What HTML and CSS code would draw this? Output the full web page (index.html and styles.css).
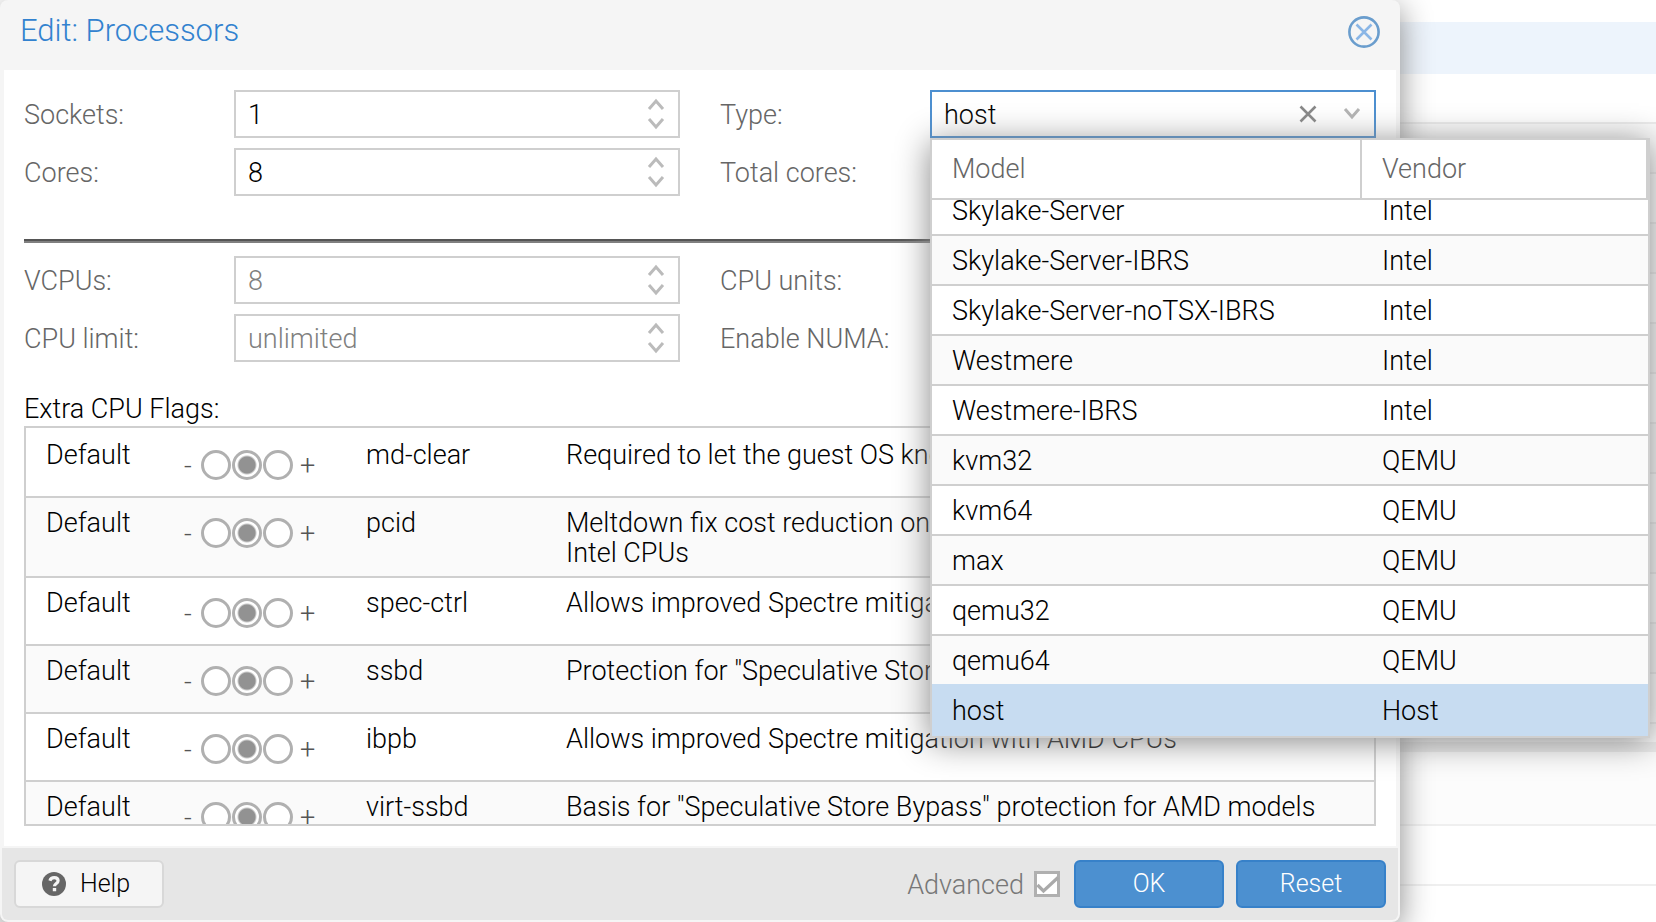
FILE: index.html
```
<!DOCTYPE html>
<html lang="en">
<head>
<meta charset="utf-8">
<title>Edit: Processors</title>
<link rel="stylesheet" href="styles.css">
</head>
<body>
<svg class="defs" aria-hidden="true">
  <symbol id="up" viewBox="0 0 18 12"><path d="M2 11 9 3l7 8" fill="none" stroke="currentColor" stroke-width="3"/></symbol>
  <symbol id="down" viewBox="0 0 18 12"><path d="M2 1l7 8 7-8" fill="none" stroke="currentColor" stroke-width="3"/></symbol>
</svg>
<div class="desktop">
  <div class="backdrop" aria-hidden="true">
    <div class="band"></div>
    <div class="lines"></div>
    <div class="split"></div>
    <div class="pane"></div>
    <div class="entry"></div>
  </div>

  <form class="dialog">
    <header class="dialog-head">
      <h1 class="title">Edit: Processors</h1>
      <button class="close" type="button" aria-label="Close">
        <svg viewBox="0 0 32 32" width="32" height="32"><g fill="none" stroke="currentColor"><circle cx="16" cy="16" r="14.6" stroke-width="2.6"/><path d="M8.500 8.500l15 15M23.500 8.500l-15 15" stroke="#8ab6e6" stroke-width="2.6"/></g></svg>
      </button>
    </header>

    <main class="dialog-body">
      <div class="fields">
        <div class="field">
          <label for="sockets">Sockets:</label>
          <div class="box"><input id="sockets" type="number" value="1">
            <div class="spin"><button type="button" aria-label="Increase sockets"><svg><use href="#up"/></svg></button><button type="button" aria-label="Decrease sockets"><svg><use href="#down"/></svg></button></div></div>
        </div>
        <div class="field">
          <label for="type">Type:</label>
          <div class="box combo"><input id="type" type="text" role="combobox" aria-expanded="true" value="host">
            <button class="trigger clear" type="button" aria-label="Clear"><svg viewBox="0 0 18 18"><path d="M1.500 1.500l15 15M16.500 1.500l-15 15" fill="none" stroke="currentColor" stroke-width="2.600"/></svg></button>
            <button class="trigger expand" type="button" aria-label="Expand"><svg><use href="#down"/></svg></button>
            <div class="picker">
              <table class="models model-head">
                <thead><tr><th scope="col">Model</th><th scope="col">Vendor</th></tr></thead>
              </table>
              <div class="picker-list">
                <table class="models model-rows">
                  <tbody>
                    <tr><td>Skylake-Server</td><td>Intel</td></tr>
                    <tr><td>Skylake-Server-IBRS</td><td>Intel</td></tr>
                    <tr><td>Skylake-Server-noTSX-IBRS</td><td>Intel</td></tr>
                    <tr><td>Westmere</td><td>Intel</td></tr>
                    <tr><td>Westmere-IBRS</td><td>Intel</td></tr>
                    <tr><td>kvm32</td><td>QEMU</td></tr>
                    <tr><td>kvm64</td><td>QEMU</td></tr>
                    <tr><td>max</td><td>QEMU</td></tr>
                    <tr><td>qemu32</td><td>QEMU</td></tr>
                    <tr class="before-selected"><td>qemu64</td><td>QEMU</td></tr>
                    <tr class="selected"><td>host</td><td>Host</td></tr>
                  </tbody>
                </table>
              </div>
            </div>
          </div>
        </div>
        <div class="field">
          <label for="cores">Cores:</label>
          <div class="box"><input id="cores" type="number" value="8">
            <div class="spin"><button type="button" aria-label="Increase cores"><svg><use href="#up"/></svg></button><button type="button" aria-label="Decrease cores"><svg><use href="#down"/></svg></button></div></div>
        </div>
        <div class="field">
          <label for="total">Total cores:</label>
          <output id="total"></output>
        </div>
      </div>

      <hr class="rule">

      <div class="fields">
        <div class="field">
          <label for="vcpus">VCPUs:</label>
          <div class="box"><input id="vcpus" type="number" placeholder="8">
            <div class="spin"><button type="button" aria-label="Increase VCPUs"><svg><use href="#up"/></svg></button><button type="button" aria-label="Decrease VCPUs"><svg><use href="#down"/></svg></button></div></div>
        </div>
        <div class="field">
          <label for="units">CPU units:</label>
          <div class="box"><input id="units" type="number"></div>
        </div>
        <div class="field">
          <label for="limit">CPU limit:</label>
          <div class="box"><input id="limit" type="number" placeholder="unlimited">
            <div class="spin"><button type="button" aria-label="Increase CPU limit"><svg><use href="#up"/></svg></button><button type="button" aria-label="Decrease CPU limit"><svg><use href="#down"/></svg></button></div></div>
        </div>
        <div class="field">
          <label for="numa">Enable NUMA:</label>
          <span class="check"><input id="numa" type="checkbox"></span>
        </div>
      </div>

      <h2 class="flags-label" id="flags-label">Extra CPU Flags:</h2>
      <div class="flags">
        <table class="flag-table" aria-labelledby="flags-label">
          <tbody>
            <tr><td>Default</td><td class="tri"><div class="slider"><span class="sign">-</span><input type="radio" name="f1" aria-label="Off"><input type="radio" name="f1" aria-label="Default" checked><input type="radio" name="f1" aria-label="On"><span class="sign plus">+</span></div></td><td>md-clear</td><td>Required to let the guest OS know if MDS is mitigated correctly</td></tr>
            <tr><td>Default</td><td class="tri"><div class="slider"><span class="sign">-</span><input type="radio" name="f2" aria-label="Off"><input type="radio" name="f2" aria-label="Default" checked><input type="radio" name="f2" aria-label="On"><span class="sign plus">+</span></div></td><td>pcid</td><td>Meltdown fix cost reduction on Westmere, Sandy-, and IvyBridge Intel CPUs</td></tr>
            <tr><td>Default</td><td class="tri"><div class="slider"><span class="sign">-</span><input type="radio" name="f3" aria-label="Off"><input type="radio" name="f3" aria-label="Default" checked><input type="radio" name="f3" aria-label="On"><span class="sign plus">+</span></div></td><td>spec-ctrl</td><td>Allows improved Spectre mitigation with Intel CPUs</td></tr>
            <tr><td>Default</td><td class="tri"><div class="slider"><span class="sign">-</span><input type="radio" name="f4" aria-label="Off"><input type="radio" name="f4" aria-label="Default" checked><input type="radio" name="f4" aria-label="On"><span class="sign plus">+</span></div></td><td>ssbd</td><td>Protection for "Speculative Store Bypass" for Intel models</td></tr>
            <tr><td>Default</td><td class="tri"><div class="slider"><span class="sign">-</span><input type="radio" name="f5" aria-label="Off"><input type="radio" name="f5" aria-label="Default" checked><input type="radio" name="f5" aria-label="On"><span class="sign plus">+</span></div></td><td>ibpb</td><td>Allows improved Spectre mitigation with AMD CPUs</td></tr>
            <tr><td>Default</td><td class="tri"><div class="slider"><span class="sign">-</span><input type="radio" name="f6" aria-label="Off"><input type="radio" name="f6" aria-label="Default" checked><input type="radio" name="f6" aria-label="On"><span class="sign plus">+</span></div></td><td>virt-ssbd</td><td>Basis for "Speculative Store Bypass" protection for AMD models</td></tr>
          </tbody>
        </table>
      </div>
    </main>

    <footer class="dialog-foot">
      <button class="btn help" type="button">
        <svg viewBox="0 0 24 24" width="24" height="24"><circle cx="12" cy="12" r="12" fill="#666"/><path d="M7.900 8.700c.7-2.200 2.200-3.100 4.300-3.100 2.300 0 3.900 1.300 3.900 3.200 0 2.700-3.600 2.700-3.600 5.400" fill="none" stroke="#f5f5f5" stroke-width="3.200"/><path d="M10.800 16h3.400v3.300h-3.400z" fill="#f5f5f5"/></svg>
        Help
      </button>
      <div class="actions">
        <label class="advanced" for="advanced">Advanced</label>
        <span class="check"><input id="advanced" type="checkbox" checked><svg viewBox="0 0 26 26" width="26" height="26"><path d="M3.500 14l6 6L24 6.500" fill="none" stroke="#aaa" stroke-width="3.200"/></svg></span>
        <button class="btn primary" type="submit">OK</button>
        <button class="btn primary" type="reset">Reset</button>
      </div>
    </footer>
  </form>
</div>
</body>
</html>
```
FILE: styles.css
```
* { box-sizing: border-box; }

body {
  margin: 0;
  background: #fff;
  color: #000;
  font: 300 27px/30px Roboto, "Liberation Sans", sans-serif;
}

input, button {
  font: inherit;
  color: inherit;
  margin: 0;
}

button {
  border: 0;
  padding: 0;
  background: none;
  cursor: pointer;
}

svg { display: block; }

.defs { position: absolute; width: 0; height: 0; }

.desktop {
  display: grid;
  min-height: 100vh;
  overflow: hidden;
}

.backdrop, .dialog { grid-area: 1 / 1; }

/* Page behind the window */
.backdrop {
  display: flex;
  flex-direction: column;
  padding-top: 22px;
}
.band { height: 52px; background: #edf4fc; }
.lines {
  height: 668px;
  background: repeating-linear-gradient(#fff 0 48px, #ebebeb 48px 50px, #fafafa 50px 98px, #ebebeb 98px 100px);
}
.split { height: 10px; background: #ebebeb; }
.pane { height: 74px; background: #fcfcfc; border-bottom: 2px solid #efefef; }
.entry { height: 60px; border-bottom: 2px solid #efefef; }

/* Window */
.dialog {
  width: calc(100% - 256px);
  display: flex;
  flex-direction: column;
  background: #f5f5f5;
  border-radius: 8px;
  box-shadow: 0 8px 32px #888;
}

.dialog-head {
  display: flex;
  justify-content: space-between;
  padding: 16px 20px 22px;
}
.title {
  margin: 0;
  font-size: 31px;
  line-height: 30px;
  font-weight: 300;
  color: #3282cf;
}
.close { width: 32px; height: 32px; color: #6a9dcd; }

.dialog-body {
  flex: 1;
  margin: 0 4px;
  padding: 20px;
  background: #fff;
}

.fields {
  display: grid;
  grid-template-columns: repeat(2, minmax(0, 1fr));
  gap: 10px 40px;
}
.field {
  display: grid;
  grid-template-columns: 210px minmax(0, 1fr);
  align-items: center;
  min-height: 48px;
  color: #666;
}
.field label { padding-top: 2px; }

.box {
  display: flex;
  align-items: center;
  height: 48px;
  border: 2px solid #cfcfcf;
  background: #fff;
}
.box input {
  flex: 1;
  min-width: 0;
  height: 100%;
  padding: 2px 12px 0;
  border: 0;
  outline: 0;
  background: none;
  color: #000;
  appearance: textfield;
}
.box input::-webkit-inner-spin-button { display: none; }
.box input::placeholder { color: #808080; opacity: 1; }

.spin {
  display: grid;
  gap: 8px;
  padding-right: 13px;
  color: #bbb;
}
.spin svg, .expand svg { width: 18px; height: 12px; }

/* The drop-down's shadow falls across the lower half of its own field */
.combo { position: relative; border-color: #4c8fd0; }
.trigger {
  display: grid;
  place-items: center;
  width: 44px;
  height: 44px;
}
.clear { color: #888; }
.clear svg { width: 18px; height: 18px; }
.expand { color: #b4b4b4; }

/* Model drop-down */
.picker {
  position: absolute;
  z-index: 1;
  top: 46px;
  left: -2px;
  width: 720px;
  border: 2px solid #cfcfcf;
  background: #fff;
  box-shadow: 0 4px 32px #888;
}
.models {
  width: 100%;
  table-layout: fixed;
  border-collapse: separate;
  border-spacing: 0;
  color: #000;
}
.models th, .models td {
  padding: 0 20px;
  text-align: left;
  font-weight: 300;
  border-bottom: 2px solid #cfcfcf;
}
.models th:first-child, .models td:first-child { width: 430px; }
.models th {
  height: 60px;
  color: #666;
  border-right: 2px solid #cfcfcf;
}
.models td { height: 50px; padding-top: 2px; }
.model-rows tr:nth-child(even) { background: #fafafa; }
.model-rows .selected { background: #c7dcf1; }
.model-rows .before-selected td, .model-rows .selected td { border-color: #c7dcf1; }
.picker-list {
  display: flex;
  flex-direction: column;
  justify-content: flex-end;
  height: 536px;
  overflow: hidden;
}
.model-rows { flex: none; }

.rule {
  height: 4px;
  margin: 43px 0 13px;
  border: 0;
  border-top: 2px solid #555;
  background: #808080;
}

.flags-label {
  margin: 32px 0 2px;
  font-size: 27px;
  line-height: 30px;
  font-weight: 300;
}
.flags {
  height: 400px;
  overflow: hidden;
  border: 2px solid #cfcfcf;
}
.flag-table {
  width: 100%;
  table-layout: fixed;
  border-collapse: separate;
  border-spacing: 0;
}
.flag-table td {
  padding: 10px 20px 8px;
  vertical-align: top;
  border-bottom: 2px solid #cfcfcf;
}
.flag-table td:nth-child(1) { width: 140px; }
.flag-table td:nth-child(2) { width: 180px; }
.flag-table td:nth-child(3) { width: 200px; }
.flag-table tr:first-child td { border-top: 2px solid #fff; }
.flag-table tr:nth-child(even) { background: #fafafa; }
.flag-table .tri { padding: 20px 0 16px 18px; }

.slider {
  display: flex;
  align-items: center;
  height: 30px;
  color: #555;
}
.sign { width: 17px; padding-top: 2px; }
.plus { padding-left: 7px; }
.slider input {
  appearance: none;
  width: 30px;
  height: 30px;
  border: 3px solid #b0b0b0;
  border-radius: 50%;
  background: #fff;
}
.slider input:checked {
  margin: 0 1px;
  background: radial-gradient(circle, #929292 8px, #fff 10px);
}

/* Footer */
.dialog-foot {
  display: flex;
  justify-content: space-between;
  align-items: center;
  margin: 2px;
  padding: 12px;
  background: #e6e6e6;
  border-radius: 0 0 6px 6px;
}
.actions { display: flex; align-items: center; }
.advanced { margin-right: 10px; padding-top: 2px; color: #777; }
.check { display: grid; margin-right: 14px; }
.check input, .check svg { grid-area: 1 / 1; pointer-events: none; }
.check input {
  appearance: none;
  width: 26px;
  height: 26px;
  border: 3px solid #b0b0b0;
  background: #fff;
  pointer-events: auto;
}
.btn {
  display: flex;
  align-items: center;
  justify-content: center;
  height: 48px;
  width: 150px;
  border: 2px solid #d8d8d8;
  border-radius: 6px;
  background: #f5f5f5;
  color: #000;
  font-size: 25px;
}
.help { gap: 14px; padding-right: 6px; }
.primary {
  border-color: #3781c9;
  background: #4c90d0;
  color: #fff;
}
.primary + .primary { margin-left: 12px; }
```
